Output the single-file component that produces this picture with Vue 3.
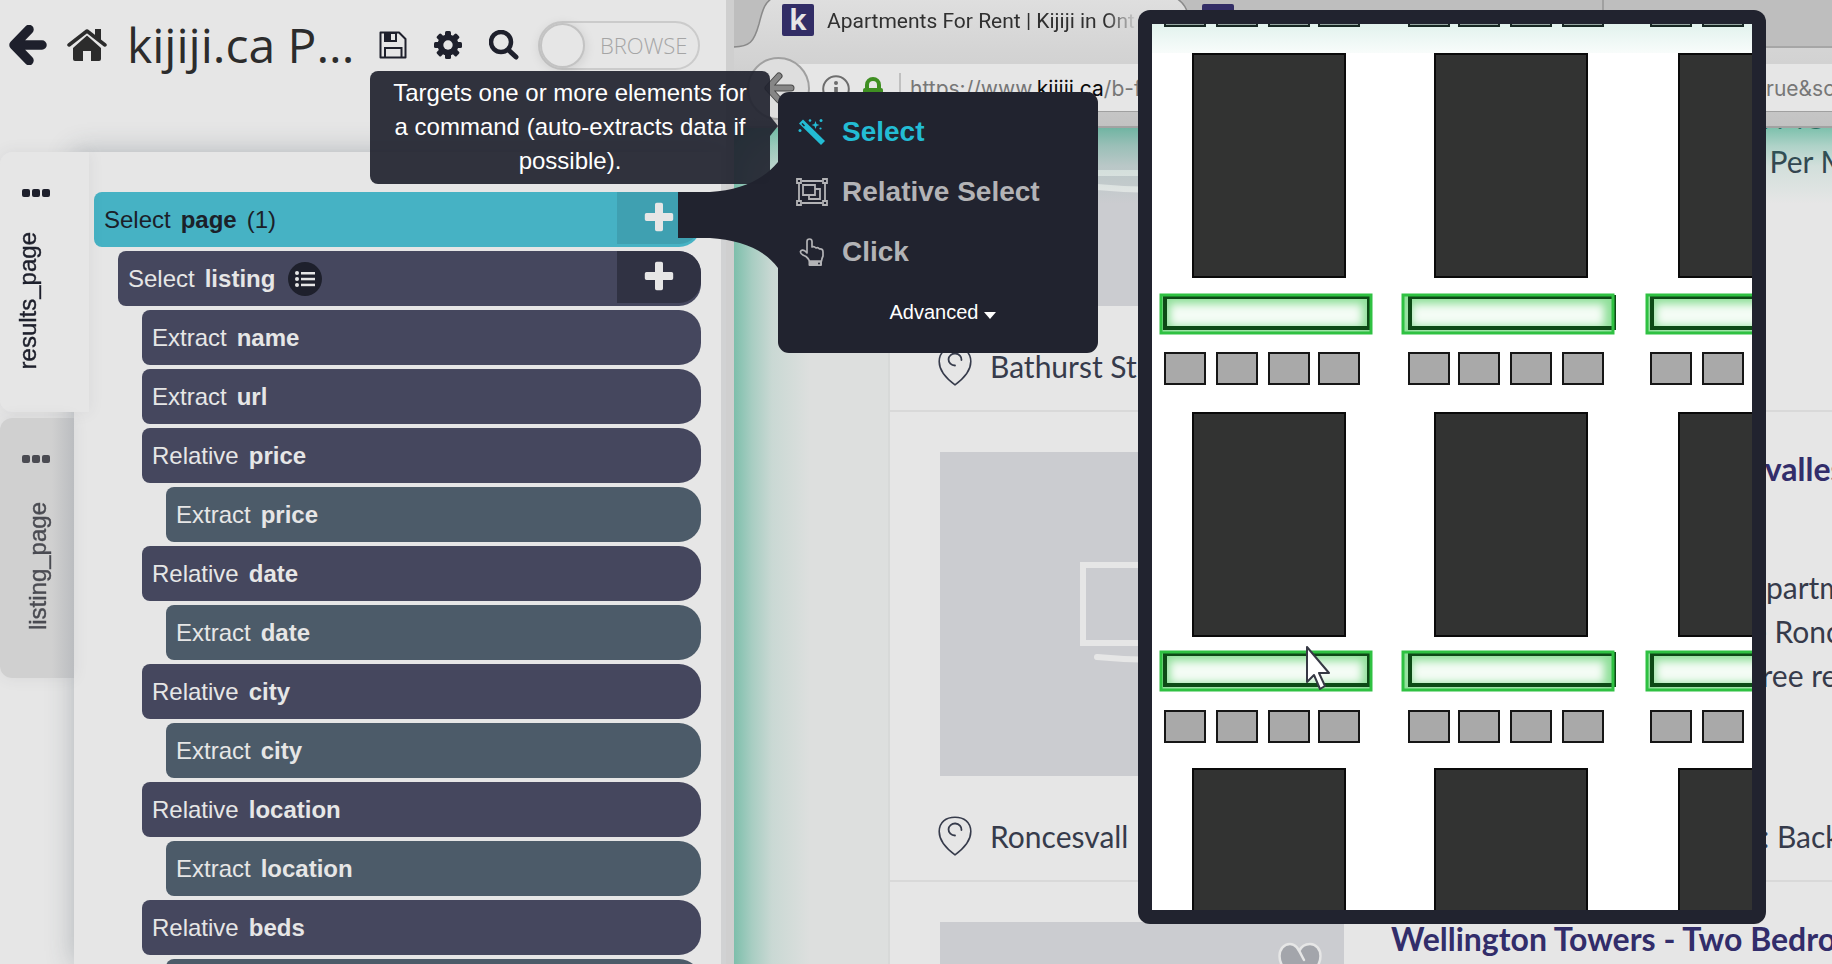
<script setup>
import { ref } from 'vue'

const browse = ref(false)
const projectTitle = 'kijiji.ca P...'

const pages = [
  { name: 'results_page', active: true },
  { name: 'listing_page', active: false },
]

const commands = [
  { verb: 'Select', target: 'page', note: '(1)', level: 0, add: true, kind: 'root' },
  { verb: 'Select', target: 'listing', level: 1, add: true, list: true, kind: 'main' },
  { verb: 'Extract', target: 'name', level: 2, kind: 'main' },
  { verb: 'Extract', target: 'url', level: 2, kind: 'main' },
  { verb: 'Relative', target: 'price', level: 2, kind: 'main' },
  { verb: 'Extract', target: 'price', level: 3, kind: 'leaf' },
  { verb: 'Relative', target: 'date', level: 2, kind: 'main' },
  { verb: 'Extract', target: 'date', level: 3, kind: 'leaf' },
  { verb: 'Relative', target: 'city', level: 2, kind: 'main' },
  { verb: 'Extract', target: 'city', level: 3, kind: 'leaf' },
  { verb: 'Relative', target: 'location', level: 2, kind: 'main' },
  { verb: 'Extract', target: 'location', level: 3, kind: 'leaf' },
  { verb: 'Relative', target: 'beds', level: 2, kind: 'main' },
  { verb: '', target: '', level: 3, kind: 'leaf' },
]

const ads = [
  { title: '', lines: ['E MO', 't Per M'], footer: '', place: 'Bathurst St', shifted: true },
  { title: 'svalles', lines: ['apartm', 'e Ronc', 'free re'], footer: 't: Back', place: 'Roncesvall', shifted: true },
  { title: 'Wellington Towers - Two Bedro', lines: [], footer: '', place: '', shifted: false },
]

/* demo drawing, in its own 600 x 886 coordinate space */
const darkBlocks = [
  { x: 40, w: 154 },
  { x: 282, w: 154 },
  { x: 526, w: 154 },
]
const darkRows = [
  { y: 29, h: 225 },
  { y: 388, h: 225 },
  { y: 744, h: 225 },
]
const greenBars = [
  { x: 8, w: 212, inner: 12, innerW: 206 },
  { x: 250, w: 212, inner: 257, innerW: 206 },
  { x: 494, w: 212, inner: 499, innerW: 206 },
]
const greenRows = [270, 627]
const chips = [13, 65, 117, 167, 257, 307, 359, 411, 499, 551]
const chipRows = [-29, 329, 687]
</script>

<template>
  <div class="app">
    <section class="sidebar">
      <header class="top">
        <button class="icon-btn" aria-label="Back">
          <svg width="38" height="40" viewBox="0 0 38 40"><path d="M20 4.500 5 20 20 35.500M7 20H33" fill="none" stroke="#1e202c" stroke-width="9.500" stroke-linecap="round" stroke-linejoin="round" /></svg>
        </button>
        <button class="icon-btn home" aria-label="Home">
          <svg width="40" height="34" viewBox="0 0 40 34"><path d="M20 7.500 34 20V31Q34 33 32 33H24V23H16V33H8Q6 33 6 31V20Z" fill="#2c2c2c" /><path d="M2 17 20 3 38 17" fill="none" stroke="#e6e6e6" stroke-width="6" /><path d="M2 17 20 3 38 17" fill="none" stroke="#2c2c2c" stroke-width="3.500" stroke-linecap="round" stroke-linejoin="round" /><path d="M28 1H34V13L28 8Z" fill="#2c2c2c" /></svg>
        </button>
        <h1>{{ projectTitle }}</h1>
        <div class="tools">
          <button class="icon-btn" aria-label="Save">
            <svg width="28" height="28" viewBox="0 0 28 28"><path d="M1.500 1.500H20L26.500 8V26.500H1.500Z" fill="none" stroke="#1e202c" stroke-width="2" stroke-linejoin="round" /><path d="M5 1H18V11H5ZM12 3V9H16V3Z" fill="#1e202c" fill-rule="evenodd" /><path d="M6 26V17H22.500V26" fill="none" stroke="#1e202c" stroke-width="2" /></svg>
          </button>
          <button class="icon-btn" aria-label="Settings">
            <svg width="28" height="28" viewBox="0 0 28 28"><g fill="#1e202c"><rect v-for="a in 4" :key="a" x="11" y="0" width="6" height="28" rx="1.500" :transform="`rotate(${a * 45} 14 14)`" /></g><circle cx="14" cy="14" r="7.500" fill="none" stroke="#1e202c" stroke-width="6" /><circle cx="14" cy="14" r="4.700" fill="#e6e6e6" /></svg>
          </button>
          <button class="icon-btn" aria-label="Search">
            <svg width="30" height="30" viewBox="0 0 30 30"><circle cx="12" cy="12" r="10" fill="none" stroke="#1e202c" stroke-width="4.500" /><path d="M19.500 20 27 27" stroke="#1e202c" stroke-width="5" stroke-linecap="round" /></svg>
          </button>
        </div>
        <label class="toggle">
          <input v-model="browse" type="checkbox" />
          <span class="knob"></span>
          <span class="toggle-text">BROWSE</span>
        </label>
      </header>

      <div class="workspace">
        <nav class="pages">
          <button v-for="p in pages" :key="p.name" class="page-tab" :class="{ active: p.active }">
            <span class="dots"><i></i><i></i><i></i></span>
            <span class="page-name">{{ p.name }}</span>
          </button>
        </nav>
        <div class="panel">
          <div v-for="(c, i) in commands" :key="i" class="command" :class="[c.kind, `level-${c.level}`]">
            <span>{{ c.verb }}</span>
            <b>{{ c.target }}</b>
            <span v-if="c.note">{{ c.note }}</span>
            <span v-if="c.list" class="list-badge">
              <svg width="20" height="16" viewBox="0 0 20 16"><g fill="#e6e6e6"><circle cx="2" cy="2" r="2" /><circle cx="2" cy="8" r="2" /><circle cx="2" cy="14" r="2" /><rect x="6" y="1" width="14" height="2.500" /><rect x="6" y="6.800" width="14" height="2.500" /><rect x="6" y="12.700" width="14" height="2.500" /></g></svg>
            </span>
            <button v-if="c.add" class="add" aria-label="Add command">
              <svg width="30" height="30" viewBox="0 0 30 30"><path d="M11 2.500Q11 .8 12.700.8H17.300Q19 .8 19 2.500V11H27.500Q29.200 11 29.200 12.700V17.300Q29.200 19 27.500 19H19V27.500Q19 29.200 17.300 29.200H12.700Q11 29.200 11 27.500V19H2.500Q.8 19 .8 17.300V12.700Q.8 11 2.500 11H11Z" fill="#e6e6e6" /></svg>
            </button>
          </div>
        </div>
      </div>
    </section>

    <section class="browser">
      <div class="chrome">
        <div class="tab-strip">
          <div class="tab">
            <svg class="tab-shape" width="470" height="50" viewBox="0 0 470 50">
              <defs><linearGradient id="tabfill" x2="0" y2="1"><stop offset="0" stop-color="#dfdfdf" /><stop offset="1" stop-color="#d4d4d4" /></linearGradient></defs>
              <path d="M-2 47C16 47 20 42 25 24C29 8 31 2 40-3H440C450 2 453 8 457 24C462 42 466 47 480 47V52H-2Z" fill="url(#tabfill)" stroke="#8a8a8a" stroke-width="1.500" />
            </svg>
            <span class="favicon">k</span>
            <span class="tab-title">Apartments For Rent | Kijiji in Onta</span>
          </div>
          <span class="favicon next"></span>
          <span class="tab-line"></span>
        </div>
        <div class="toolbar">
          <button class="nav-back" aria-label="Go back">
            <svg width="32" height="32" viewBox="0 0 32 32"><path d="M16 4 5 16 16 28M7 16H28" fill="none" stroke="#4a4a4a" stroke-width="7" stroke-linecap="round" stroke-linejoin="round" /><path d="M16 4 5 16 16 28M7 16H28" fill="none" stroke="#868686" stroke-width="5" stroke-linecap="round" stroke-linejoin="round" /></svg>
          </button>
          <div class="address">
            <svg class="info" width="28" height="28" viewBox="0 0 28 28"><circle cx="14" cy="14" r="12.800" fill="none" stroke="#6e6e6e" stroke-width="2" /><circle cx="14" cy="8" r="2" fill="#6e6e6e" /><rect x="12.200" y="12" width="3.600" height="10" fill="#6e6e6e" /></svg>
            <svg class="lock" width="22" height="24" viewBox="0 0 22 24"><path d="M5 13V8A6 6 0 0 1 17 8V13" fill="none" stroke="#3f8f22" stroke-width="4" /><rect x="1" y="11" width="20" height="13" rx="2" fill="#3f8f22" /></svg>
            <span class="url"><span>https://www.</span><b>kijiji.ca</b><span>/b-fo</span></span>
            <span class="url-end">rue&amp;so</span>
          </div>
        </div>
      </div>

      <main class="site">
        <div class="ads">
          <article v-for="(ad, i) in ads" :key="i" class="ad">
            <div class="media">
              <div class="photo">
                <svg width="404" height="324" viewBox="0 0 404 324"><path d="M143 113H291V191H143Z" fill="none" stroke="#e6e6e6" stroke-width="6" /><path d="M157 205Q217 211 277 205" fill="none" stroke="#e6e6e6" stroke-width="6" stroke-linecap="round" /></svg>
                <svg class="heart" width="44" height="42" viewBox="0 0 44 42"><path d="M22 40C12 34 1.500 25 1.500 14C1.500 7 6 2 12 2C18 2 20 8 22 11C24 6 27 2 32 2C38 2 42.500 7 42.500 14C42.500 25 32 34 22 40Z" fill="#a3a5ab" /><path d="M26 18C21 9 19 2 12 2C6 2 1.500 7 1.500 14C1.500 25 12 34 22 40C32 34 42.500 25 42.500 14C42.500 7 38 2 32 2C27 2 23 5 21 9" fill="none" stroke="#e6e6e6" stroke-width="2.500" stroke-linecap="round" /></svg>
              </div>
              <div v-if="ad.place" class="place">
                <svg width="34" height="40" viewBox="0 0 34 40"><path d="M17 1.200C8 1.200 1.200 6 1.200 15.500C1.200 25 9 33 17 38.800C25 33 32.800 25 32.800 15.500C32.800 6 26 1.200 17 1.200Z" fill="none" stroke="#363b4b" stroke-width="1.600" /><path d="M17 19.500A6.500 6 0 1 1 23.500 14" fill="none" stroke="#363b4b" stroke-width="1.800" stroke-linecap="round" /></svg>
                <span>{{ ad.place }}</span>
              </div>
            </div>
            <div class="info-col" :class="{ shifted: ad.shifted }">
              <a href="#" class="ad-title">{{ ad.title }}</a>
              <p class="desc"><span v-for="line in ad.lines" :key="line">{{ line }}</span></p>
              <p class="ad-footer">{{ ad.footer }}</p>
            </div>
          </article>
        </div>
        <div class="glow"></div>
      </main>
    </section>

    <div class="menu-wrap">
      <svg class="neck" width="101" height="106" viewBox="0 0 101 106"><path d="M0 30H32C62 28 85 18 100 0H101V106H100C86 87 62 78 32 76H0Z" fill="#21232f" /></svg>
      <div class="menu">
        <button class="menu-item current">
          <svg width="32" height="30" viewBox="0 0 32 30"><path d="M3 6.500 7 2.500 29 24 25 28Z" fill="#23bcd4" /><path d="M6 6.500 8.500 9" stroke="#21232f" stroke-width="1.500" /><g fill="#23bcd4"><path d="M19.500 4 20.600 6.900 23.500 8 20.600 9.100 19.500 12 18.400 9.100 15.500 8 18.400 6.900Z" /><circle cx="14" cy="3.500" r="1.300" /><circle cx="25" cy="3.500" r="1.500" /><circle cx="4" cy="13.500" r="1.500" /><circle cx="24.500" cy="11.500" r="1.100" /></g></svg>
          <span>Select</span>
        </button>
        <button class="menu-item">
          <svg width="32" height="30" viewBox="0 0 32 30"><g fill="none" stroke="#b3b3b6" stroke-width="1.800"><path d="M6 4H26M6 26H26M3 7V23M29 7V23M7 8H19V18H7ZM19 12H24V22H13V18" /><path d="M1 2H5V6H1ZM27 2H31V6H27ZM1 24H5V28H1ZM27 24H31V28H27Z" /></g></svg>
          <span>Relative Select</span>
        </button>
        <button class="menu-item">
          <svg width="32" height="30" viewBox="0 0 32 30"><path d="M11 16V4.500Q11 2 13.500 2Q16 2 16 4.500V10Q18 9 20 11Q22 10 23.500 12Q27 11.500 27 15V19Q26 21 25.500 24H13.500Q13 22 10 19.500Q4 17 4.500 14.500Q6 12 9 14Z" fill="none" stroke="#b3b3b6" stroke-width="1.700" stroke-linejoin="round" /><path d="M12.500 24H26V28Q26 29 25 29H13.500Q12.500 29 12.500 28Z" fill="#b3b3b6" /><circle cx="23" cy="26.500" r="1" fill="#21232f" /></svg>
          <span>Click</span>
        </button>
        <button class="advanced">
          <span>Advanced</span>
          <svg width="12" height="7" viewBox="0 0 12 7"><path d="M0 0H12L6 7Z" fill="#fff" /></svg>
        </button>
      </div>
    </div>

    <div class="tooltip" role="tooltip">Targets one or more elements for a command (auto-extracts data if possible).</div>

    <div class="demo">
      <svg viewBox="0 0 600 886">
        <defs>
          <linearGradient id="wash" x2="0" y2="1"><stop offset="0" stop-color="#1e9f79" stop-opacity=".13" /><stop offset="1" stop-color="#1e9f79" stop-opacity=".03" /></linearGradient>
          <filter id="soft" x="-10%" y="-30%" width="120%" height="160%"><feGaussianBlur stdDeviation="4" /></filter>
        </defs>
        <rect width="600" height="886" fill="#fff" />
        <template v-for="y in chipRows" :key="'c' + y">
          <rect v-for="x in chips" :key="x" :x="x" :y="y" width="40" height="31" fill="#a9a9a9" stroke="#161616" stroke-width="2" />
        </template>
        <rect width="600" height="29" fill="url(#wash)" />
        <template v-for="r in darkRows" :key="'d' + r.y">
          <rect v-for="d in darkBlocks" :key="d.x" :x="d.x + 1" :y="r.y + 1" :width="d.w - 2" :height="r.h - 2" fill="#323332" stroke="#0a0a0a" stroke-width="2" />
        </template>
        <g v-for="y in greenRows" :key="'g' + y">
          <g v-for="g in greenBars" :key="g.x">
            <rect :x="g.x + 1" :y="y + 1" :width="g.w - 2" height="38" fill="#8fdf99" />
            <rect :x="g.x + 10" :y="y + 10" :width="g.w - 20" height="22" fill="#f4fcf5" filter="url(#soft)" />
            <rect :x="g.inner + 1" :y="y + 3" :width="g.innerW - 2" height="31" fill="none" stroke="#0d4a16" stroke-width="4" />
            <rect :x="g.x + 1" :y="y + 1" :width="g.w - 2" height="38" fill="none" stroke="#2fc142" stroke-width="3" />
          </g>
        </g>
        <path d="M155 623V658L162 651L168 665L173 662L167 649H177Z" fill="#fff" stroke="#363844" stroke-width="2" stroke-linejoin="round" />
      </svg>
    </div>
  </div>
</template>

<style>
body {
  background: #e6e6e6;
}
</style>

<style scoped>
* {
  box-sizing: border-box;
}
button {
  border: 0;
  padding: 0;
  background: none;
  font: inherit;
  color: inherit;
  cursor: pointer;
}
svg {
  display: block;
}
.app {
  position: relative;
  display: grid;
  grid-template-columns: 734px minmax(0, 1fr);
  height: 100vh;
  overflow: hidden;
  background: #e6e6e6;
  font-family: "Liberation Sans", Arial, sans-serif;
  font-size: 24px;
}

/* sidebar */
.sidebar {
  display: flex;
  flex-direction: column;
  min-height: 0;
  border-right: 8px solid #cfcfcf;
  overflow: hidden;
}
.top {
  flex: none;
  display: flex;
  align-items: center;
  height: 152px;
  padding: 0 26px 62px 9px;
}
.icon-btn {
  flex: none;
}
.home {
  margin-left: 20px;
}
h1 {
  flex: none;
  margin: 0 0 0 20px;
  font: 400 48px/64px "Open Sans", "Noto Sans", sans-serif;
  color: #2c2c2c;
  white-space: nowrap;
  width: 252px;
}
.tools {
  display: flex;
  align-items: center;
  gap: 27px;
  width: 159px;
}
.toggle {
  position: relative;
  display: flex;
  align-items: center;
  gap: 15px;
  width: 162px;
  height: 49px;
  border: 2px solid #cbcbcb;
  border-radius: 25px;
  font: 300 22px/30px "Open Sans", sans-serif;
  color: #a5a5a5;
}
.toggle input {
  position: absolute;
  inset: 0;
  margin: 0;
  opacity: 0;
}
.knob {
  width: 45px;
  height: 45px;
  border: 2px solid #c3c3c3;
  border-radius: 50%;
  background: #e6e6e6;
  box-shadow: 0 2px 12px rgba(0, 0, 0, 0.12);
}
.workspace {
  flex: 1;
  display: flex;
  min-height: 0;
}
.pages {
  position: relative;
  z-index: 1;
  display: flex;
  flex-direction: column;
  gap: 6px;
  width: 74px;
  flex: none;
}
.page-tab {
  display: flex;
  flex-direction: column;
  align-items: flex-start;
  height: 260px;
  width: 74px;
  padding: 37px 0 0 22px;
  gap: 39px;
  border-radius: 12px 0 0 12px;
  background: linear-gradient(90deg, #d0d0d0 70%, #bbbdc0);
  color: #4a4b52;
  box-shadow: 0 0 16px rgba(60, 70, 80, 0.08);
  -webkit-text-stroke: 0.4px currentColor;
}
.page-tab.active {
  width: 89px;
  gap: 35px;
  background: #e6e6e6;
  color: #1e202c;
}
.dots {
  display: flex;
  gap: 2px;
}
.dots i {
  width: 8px;
  height: 8px;
  border-radius: 2px;
  background: currentColor;
}
.page-name {
  writing-mode: vertical-rl;
  transform: rotate(180deg);
  line-height: 28px;
  margin-left: 2px;
}
.page-tab.active .page-name {
  margin-left: -8px;
}
.panel {
  flex: 1;
  display: flex;
  flex-direction: column;
  gap: 4px;
  padding: 40px 20px 0;
  background: #e6e6e6;
  border-right: 5px solid #d1d2d3;
  box-shadow: 0 0 26px rgba(50, 65, 80, 0.3);
}
.command {
  position: relative;
  flex: none;
  display: flex;
  align-items: center;
  gap: 10px;
  height: 55px;
  padding-left: 10px;
  border-radius: 8px 22px 22px 8px;
  overflow: hidden;
  color: #e6e6e6;
}
.root {
  background: #46b2c4;
  color: #1b2029;
}
.main {
  background: #45475e;
}
.leaf {
  background: #4c5b69;
}
.level-1 {
  margin-left: 24px;
}
.level-2 {
  margin-left: 48px;
}
.level-3 {
  margin-left: 72px;
}
.list-badge {
  display: grid;
  place-items: center;
  width: 34px;
  height: 34px;
  margin-left: 3px;
  border-radius: 50%;
  background: #1e202c;
}
.add {
  align-self: flex-start;
  display: grid;
  place-items: center;
  width: 84px;
  height: 52px;
  margin-left: auto;
  padding-bottom: 2px;
  border-radius: 0 22px 22px 0;
  background: #303243;
}
.root .add {
  background: #3fa0b1;
}

/* browser window */
.browser {
  isolation: isolate;
  display: flex;
  flex-direction: column;
  min-height: 0;
  overflow: hidden;
}
.chrome {
  flex: none;
  display: flex;
  flex-direction: column;
  height: 128px;
  border-bottom: 2px solid #a2a2a2;
  background: linear-gradient(#dcdcdc, #d2d2d2 50%, #c2c2c2);
}
.tab-strip {
  display: flex;
  height: 48px;
  background: #bebebe;
  border-bottom: 2px solid #a6a6a6;
}
.tab {
  position: relative;
  flex: none;
  display: flex;
  gap: 13px;
  width: 468px;
  height: 48px;
  padding: 4px 0 0 48px;
}
.tab-shape {
  position: absolute;
  left: 0;
  top: 0;
}
.favicon {
  position: relative;
  flex: none;
  width: 32px;
  height: 32px;
  border-radius: 2px;
  background: #322d66;
  color: #e6e6e6;
  font: 700 28px/30px "Noto Sans", sans-serif;
  text-align: center;
}
.next {
  margin-top: 4px;
}
.tab-title {
  position: relative;
  width: 310px;
  overflow: hidden;
  white-space: nowrap;
  font: 400 21px/34px Roboto, sans-serif;
  color: #303030;
  mask-image: linear-gradient(90deg, #000 90%, transparent);
}
.tab-line {
  width: 2px;
  margin-left: 368px;
  background: #a0a0a0;
}
.toolbar {
  flex: 1;
  display: flex;
  padding: 16px 0 14px 13px;
}
.nav-back {
  position: relative;
  z-index: 1;
  flex: none;
  align-self: center;
  display: grid;
  place-items: center;
  width: 63px;
  height: 63px;
  margin: -8px 0;
  border: 2px solid #a0a0a0;
  border-radius: 50%;
  background: #dedede;
}
.address {
  flex: 1;
  display: flex;
  align-items: center;
  margin-left: -30px;
  padding: 2px 0 0 42px;
  border-bottom: 1px solid #a0a0a0;
  background: #e6e6e6;
  font: 400 21px/32px Inter, sans-serif;
  color: #777;
  white-space: nowrap;
  overflow: hidden;
}
.lock {
  margin-left: 12px;
}
.url {
  flex: 1;
  margin-left: 15px;
  padding-left: 9px;
  border-left: 2px solid #c0c0c0;
}
.url b {
  font-weight: 400;
  color: #0a0a0a;
}
.url-end {
  width: 66px;
}
.site {
  position: relative;
  flex: 1;
  min-height: 0;
  padding-left: 154px;
  overflow: hidden;
  background: #dddfde;
}
.ads {
  margin-top: -188px;
  border-left: 2px solid #d7d9d8;
  background: #e6e6e6;
}
.ad {
  display: flex;
  gap: 47px;
  height: 470px;
  padding: 40px 0 0 50px;
  border-top: 2px solid #d9d9d9;
  font-family: Lato, sans-serif;
  font-size: 30px;
  line-height: 44px;
  color: #363b4b;
  white-space: nowrap;
}
.media {
  flex: none;
  width: 404px;
}
.photo {
  position: relative;
  background: #cbccd0;
}
.heart {
  position: absolute;
  top: 20px;
  right: 22px;
}
.place {
  display: flex;
  align-items: center;
  gap: 18px;
  margin-left: -2px;
  padding-top: 38px;
}
.info-col {
  flex: 1;
  min-width: 0;
  margin-top: -5px;
}
.shifted {
  padding-left: 360px;
}
.ad-title {
  display: block;
  height: 44px;
  color: #322d6a;
  font-size: 32px;
  font-weight: 700;
  text-decoration: none;
}
.desc {
  height: 132px;
  margin: 74px 0 117px;
}
.desc span {
  display: block;
}
.ad-footer {
  margin: 0;
}
.glow {
  position: absolute;
  inset: 0;
  background:
    linear-gradient(90deg, rgba(30, 159, 121, 0.5), rgba(30, 159, 121, 0.28) 18px, rgba(30, 159, 121, 0.1) 38px, rgba(30, 159, 121, 0) 76px),
    linear-gradient(rgba(30, 159, 121, 0.52), rgba(30, 159, 121, 0.28) 18px, rgba(30, 159, 121, 0.1) 38px, rgba(30, 159, 121, 0) 76px);
}

/* command menu */
.menu-wrap {
  position: absolute;
  left: 678px;
  top: 92px;
  display: flex;
}
.neck {
  margin: 70px -1px 0 0;
}
.menu {
  display: flex;
  flex-direction: column;
  width: 320px;
  height: 261px;
  padding: 10px 18px 0;
  border-radius: 11px;
  background: #21232f;
}
.menu-item {
  display: flex;
  align-items: center;
  gap: 14px;
  height: 60px;
  font-weight: 700;
  font-size: 28px;
  color: #b3b3b6;
}
.current {
  color: #23bcd4;
}
.advanced {
  display: flex;
  align-items: center;
  justify-content: center;
  gap: 6px;
  height: 60px;
  padding-left: 10px;
  font-size: 20px;
  color: #fff;
}
.advanced svg {
  margin-top: 6px;
}
.tooltip {
  position: absolute;
  left: 370px;
  top: 71px;
  width: 400px;
  padding: 5px 16px 6px;
  border-radius: 8px;
  background: rgba(33, 35, 47, 0.92);
  color: #fff;
  font-size: 24px;
  line-height: 34px;
  text-align: center;
}
.tooltip::after {
  content: "";
  position: absolute;
  left: 100%;
  top: 45px;
  border: 10px solid transparent;
  border-left: 8px solid rgba(33, 35, 47, 0.92);
  border-right: 0;
}

/* demo animation frame */
.demo {
  position: absolute;
  top: 10px;
  right: 66px;
  width: 628px;
  padding: 14px;
  border-radius: 12px;
  background: #21232f;
}
.demo svg {
  width: 100%;
}
</style>
